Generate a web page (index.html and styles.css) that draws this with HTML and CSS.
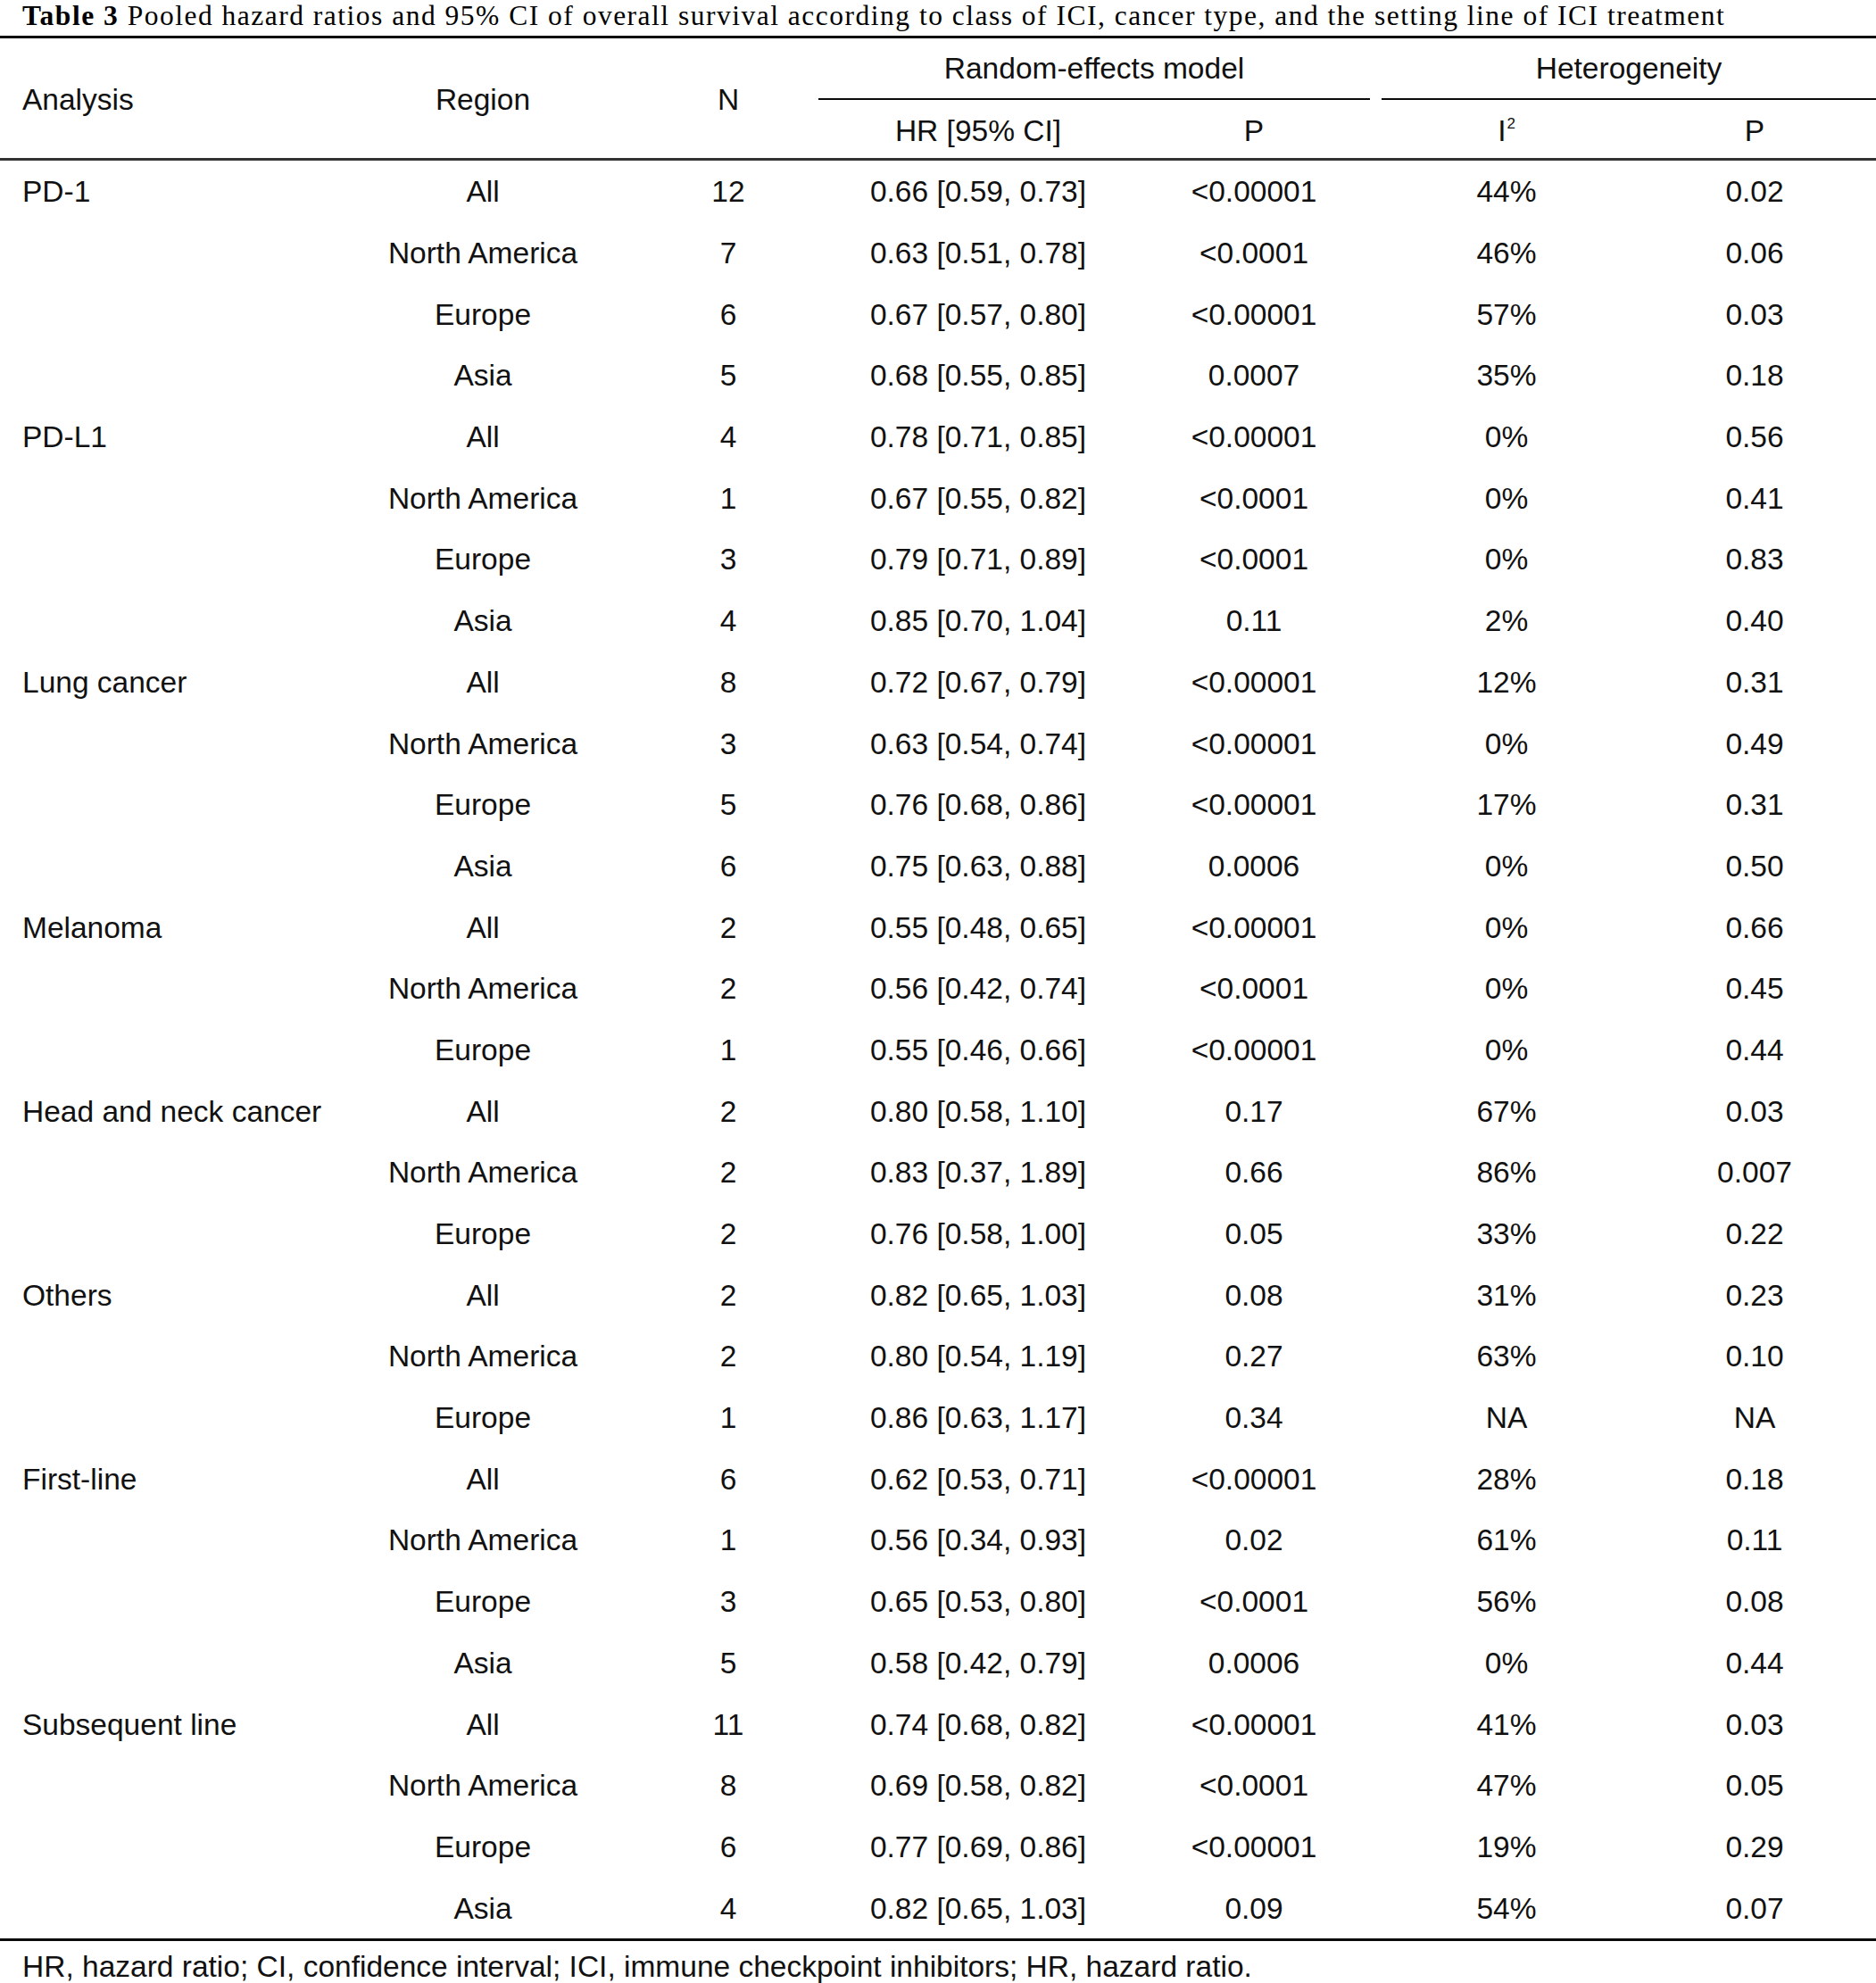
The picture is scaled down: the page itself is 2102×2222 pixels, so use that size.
FILE: index.html
```html
<!DOCTYPE html>
<html lang="en">
<head>
<meta charset="utf-8">
<title>Table 3</title>
<link rel="stylesheet" href="styles.css">
</head>
<body>
<div class="page">
  <div class="caption"><b>Table 3</b> Pooled hazard ratios and 95% CI of overall survival according to class of ICI, cancer type, and the setting line of ICI treatment</div>
  <table class="tbl">
    <colgroup>
      <col class="c1"><col class="c2"><col class="c3"><col class="c4"><col class="c5"><col class="c6"><col class="c7">
    </colgroup>
    <thead>
      <tr class="hr1">
        <th rowspan="2" class="left span">Analysis</th>
        <th rowspan="2" class="span">Region</th>
        <th rowspan="2" class="span">N</th>
        <th colspan="2" class="grp"><div class="grp-label grp-a">Random-effects model</div></th>
        <th colspan="2" class="grp"><div class="grp-label grp-b">Heterogeneity</div></th>
      </tr>
      <tr class="hr2">
        <th>HR [95% CI]</th>
        <th>P</th>
        <th>I<span class="sup">2</span></th>
        <th>P</th>
      </tr>
    </thead>
    <tbody>
      <tr><td class="left">PD-1</td><td>All</td><td>12</td><td>0.66 [0.59, 0.73]</td><td>&lt;0.00001</td><td>44%</td><td>0.02</td></tr>
      <tr><td class="left"></td><td>North America</td><td>7</td><td>0.63 [0.51, 0.78]</td><td>&lt;0.0001</td><td>46%</td><td>0.06</td></tr>
      <tr><td class="left"></td><td>Europe</td><td>6</td><td>0.67 [0.57, 0.80]</td><td>&lt;0.00001</td><td>57%</td><td>0.03</td></tr>
      <tr><td class="left"></td><td>Asia</td><td>5</td><td>0.68 [0.55, 0.85]</td><td>0.0007</td><td>35%</td><td>0.18</td></tr>
      <tr><td class="left">PD-L1</td><td>All</td><td>4</td><td>0.78 [0.71, 0.85]</td><td>&lt;0.00001</td><td>0%</td><td>0.56</td></tr>
      <tr><td class="left"></td><td>North America</td><td>1</td><td>0.67 [0.55, 0.82]</td><td>&lt;0.0001</td><td>0%</td><td>0.41</td></tr>
      <tr><td class="left"></td><td>Europe</td><td>3</td><td>0.79 [0.71, 0.89]</td><td>&lt;0.0001</td><td>0%</td><td>0.83</td></tr>
      <tr><td class="left"></td><td>Asia</td><td>4</td><td>0.85 [0.70, 1.04]</td><td>0.11</td><td>2%</td><td>0.40</td></tr>
      <tr><td class="left">Lung cancer</td><td>All</td><td>8</td><td>0.72 [0.67, 0.79]</td><td>&lt;0.00001</td><td>12%</td><td>0.31</td></tr>
      <tr><td class="left"></td><td>North America</td><td>3</td><td>0.63 [0.54, 0.74]</td><td>&lt;0.00001</td><td>0%</td><td>0.49</td></tr>
      <tr><td class="left"></td><td>Europe</td><td>5</td><td>0.76 [0.68, 0.86]</td><td>&lt;0.00001</td><td>17%</td><td>0.31</td></tr>
      <tr><td class="left"></td><td>Asia</td><td>6</td><td>0.75 [0.63, 0.88]</td><td>0.0006</td><td>0%</td><td>0.50</td></tr>
      <tr><td class="left">Melanoma</td><td>All</td><td>2</td><td>0.55 [0.48, 0.65]</td><td>&lt;0.00001</td><td>0%</td><td>0.66</td></tr>
      <tr><td class="left"></td><td>North America</td><td>2</td><td>0.56 [0.42, 0.74]</td><td>&lt;0.0001</td><td>0%</td><td>0.45</td></tr>
      <tr><td class="left"></td><td>Europe</td><td>1</td><td>0.55 [0.46, 0.66]</td><td>&lt;0.00001</td><td>0%</td><td>0.44</td></tr>
      <tr><td class="left">Head and neck cancer</td><td>All</td><td>2</td><td>0.80 [0.58, 1.10]</td><td>0.17</td><td>67%</td><td>0.03</td></tr>
      <tr><td class="left"></td><td>North America</td><td>2</td><td>0.83 [0.37, 1.89]</td><td>0.66</td><td>86%</td><td>0.007</td></tr>
      <tr><td class="left"></td><td>Europe</td><td>2</td><td>0.76 [0.58, 1.00]</td><td>0.05</td><td>33%</td><td>0.22</td></tr>
      <tr><td class="left">Others</td><td>All</td><td>2</td><td>0.82 [0.65, 1.03]</td><td>0.08</td><td>31%</td><td>0.23</td></tr>
      <tr><td class="left"></td><td>North America</td><td>2</td><td>0.80 [0.54, 1.19]</td><td>0.27</td><td>63%</td><td>0.10</td></tr>
      <tr><td class="left"></td><td>Europe</td><td>1</td><td>0.86 [0.63, 1.17]</td><td>0.34</td><td>NA</td><td>NA</td></tr>
      <tr><td class="left">First-line</td><td>All</td><td>6</td><td>0.62 [0.53, 0.71]</td><td>&lt;0.00001</td><td>28%</td><td>0.18</td></tr>
      <tr><td class="left"></td><td>North America</td><td>1</td><td>0.56 [0.34, 0.93]</td><td>0.02</td><td>61%</td><td>0.11</td></tr>
      <tr><td class="left"></td><td>Europe</td><td>3</td><td>0.65 [0.53, 0.80]</td><td>&lt;0.0001</td><td>56%</td><td>0.08</td></tr>
      <tr><td class="left"></td><td>Asia</td><td>5</td><td>0.58 [0.42, 0.79]</td><td>0.0006</td><td>0%</td><td>0.44</td></tr>
      <tr><td class="left">Subsequent line</td><td>All</td><td>11</td><td>0.74 [0.68, 0.82]</td><td>&lt;0.00001</td><td>41%</td><td>0.03</td></tr>
      <tr><td class="left"></td><td>North America</td><td>8</td><td>0.69 [0.58, 0.82]</td><td>&lt;0.0001</td><td>47%</td><td>0.05</td></tr>
      <tr><td class="left"></td><td>Europe</td><td>6</td><td>0.77 [0.69, 0.86]</td><td>&lt;0.00001</td><td>19%</td><td>0.29</td></tr>
      <tr><td class="left"></td><td>Asia</td><td>4</td><td>0.82 [0.65, 1.03]</td><td>0.09</td><td>54%</td><td>0.07</td></tr>
    </tbody>
  </table>
  <div class="footnote">HR, hazard ratio; CI, confidence interval; ICI, immune checkpoint inhibitors; HR, hazard ratio.</div>
</div>
</body>
</html>
```

FILE: styles.css
```css
html, body {
  margin: 0;
  padding: 0;
  background: #ffffff;
}

.page {
  width: 2102px;
  color: #111111;
  font-family: "Liberation Sans", Arial, sans-serif;
  font-size: 33.5px;
}

.caption {
  font-family: "Liberation Serif", "Times New Roman", serif;
  font-size: 31.5px;
  letter-spacing: 1.5px;
  line-height: 35px;
  padding: 0 0 5px 25px;
  height: 35px;
  white-space: nowrap;
  color: #000;
}

.caption b {
  font-weight: bold;
}

.tbl {
  width: 2102px;
  table-layout: fixed;
  border-collapse: separate;
  border-spacing: 0;
  border-top: 3px solid #0a0a0a;
  border-bottom: 3px solid #0a0a0a;
}

.c1 { width: 378px; }
.c2 { width: 326px; }
.c3 { width: 224px; }
.c4 { width: 336px; }
.c5 { width: 282px; }
.c6 { width: 284px; }
.c7 { width: 272px; }

th, td {
  padding: 0;
  text-align: center;
  vertical-align: middle;
  font-weight: normal;
  white-space: nowrap;
  line-height: normal;
}

.left {
  text-align: left;
  padding-left: 25px;
}

.hr1 { height: 69px; }
.hr2 { height: 68px; }

.span {
  padding-top: 3px;
  border-bottom: 3px solid #333333;
}

.hr2 th {
  padding-top: 4px;
  border-bottom: 3px solid #333333;
}

.grp {
  vertical-align: bottom;
}

.grp-label {
  height: 67px;
  display: flex;
  align-items: center;
  justify-content: center;
  border-bottom: 2px solid #0a0a0a;
}

.grp-a {
  margin: 0 11px 0 -11px;
}

.grp-b {
  margin-left: 2px;
}

.sup {
  font-size: 17px;
  vertical-align: 14px;
  margin-left: 1px;
}

tbody tr {
  height: 68.69px;
}

tbody td {
  padding-top: 2px;
}

.left:empty {
  padding-top: 0;
}

.footnote {
  line-height: 40px;
  padding: 9px 0 0 25px;
}
```
